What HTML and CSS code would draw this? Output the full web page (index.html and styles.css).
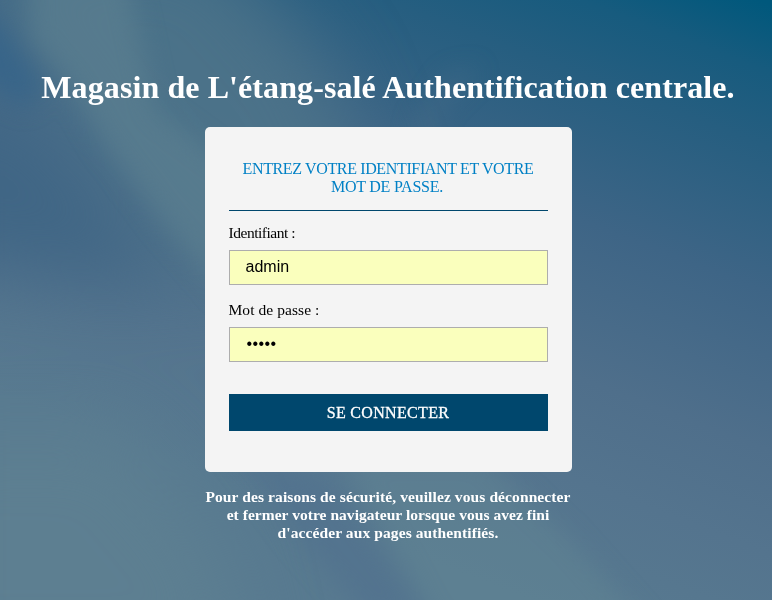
FILE: index.html
```html
<!DOCTYPE html>
<html lang="fr">
<head>
<meta charset="utf-8">
<title>Authentification centrale</title>
<link rel="stylesheet" href="styles.css">
</head>
<body>
<svg class="sky" viewBox="0 0 772 600" preserveAspectRatio="none" aria-hidden="true">
  <defs>
    <linearGradient id="base" gradientUnits="userSpaceOnUse" x1="760" y1="0" x2="530" y2="600">
      <stop offset="0" stop-color="#00587c"/>
      <stop offset=".1" stop-color="#175b7e"/>
      <stop offset=".21" stop-color="#265e80"/>
      <stop offset=".42" stop-color="#3e6586"/>
      <stop offset=".65" stop-color="#4f6f8b"/>
      <stop offset=".8" stop-color="#54748e"/>
      <stop offset="1" stop-color="#587a90"/>
    </linearGradient>
    <filter id="soft" x="-50%" y="-50%" width="200%" height="200%" color-interpolation-filters="sRGB"><feGaussianBlur stdDeviation="12"/></filter>
    <filter id="wide" x="-50%" y="-50%" width="200%" height="200%" color-interpolation-filters="sRGB"><feGaussianBlur stdDeviation="38"/></filter>
  </defs>
  <rect width="772" height="600" fill="url(#base)"/>
  <g filter="url(#wide)">
    <path d="M-60-60H210L320 60 380 200 210 290 50 80Z" fill="#4d748a" opacity=".85"/>
    <path d="M-80 40L60 130 180 290-80 260Z" fill="#406685"/>
    <path d="M-80 430L120 430 220 550 250 680H-80Z" fill="#5d7f91"/>
  </g>
  <g filter="url(#soft)">
    <path d="M28-30H125L155 110 230 165V300L165 225 105 145 70 85 30 38Z" fill="#5c8090" opacity=".65"/>
    <path d="M-30 5L5 30 42 85 26 108-30 70Z" fill="#31638a" opacity=".65"/>
    <path d="M340 455L480 455 570 540 650 630H440L390 540Z" fill="#618594" opacity=".5"/>
    <path d="M415 125L450 75 480 68 440 108 425 160Z" fill="#4b7089" opacity=".5"/>
    <path d="M225 440L330 480 430 620H370L300 540Z" fill="#50708e" opacity=".6"/>
  </g>
</svg>
<main class="page">
  <h1>Magasin de L'étang-salé Authentification centrale.</h1>
  <form class="card">
    <h2><span class="line-one">Entrez votre identifiant et votre</span><br><span class="line-two">mot de passe.</span></h2>
    <label class="user-label" for="user">Identifiant :</label>
    <input id="user" type="text" value="admin">
    <label class="pass-label" for="pass">Mot de passe :</label>
    <input id="pass" type="password" value="admin">
    <button type="button">SE CONNECTER</button>
  </form>
  <p class="notice"><span class="notice-one">Pour des raisons de sécurité, veuillez vous déconnecter</span><br><span class="notice-two">et fermer votre navigateur lorsque vous avez fini</span><br><span class="notice-three">d'accéder aux pages authentifiés.</span></p>
</main>
</body>
</html>
```
FILE: styles.css
```css
* { box-sizing: border-box; }
body {
  margin: 0;
  height: 600px;
  overflow: hidden;
  background: #426786;
  font-family: "Liberation Serif", serif;
}
.sky {
  position: absolute;
  inset: 0;
  width: 100%;
  height: 100%;
  z-index: -1;
}
.page {
  display: flex;
  flex-direction: column;
  align-items: center;
  padding: 69px 0 0 4px;
}
h1 {
  margin: 0 0 21px;
  color: #fff;
  font-size: 32px;
  line-height: 37px;
  letter-spacing: .09px;
  white-space: nowrap;
}
.card {
  display: flex;
  flex-direction: column;
  width: 367px;
  height: 345px;
  padding: 33px 24px 0;
  border-radius: 5px;
  background: #f4f4f4;
}
h2 {
  height: 51px;
  margin: 0 0 13px;
  border-bottom: 1px solid #00476d;
  color: #0080c5;
  font-size: 16px;
  font-weight: 400;
  line-height: 18px;
  text-align: center;
  text-transform: uppercase;
  white-space: nowrap;
}
.line-one { letter-spacing: -.36px; }
.line-two { letter-spacing: -.23px; padding-right: 2px; }
label {
  font-size: 16px;
  line-height: 18px;
  margin-bottom: 8px;
  color: #000;
}
.user-label { font-size: 15.5px; letter-spacing: -.47px; }
.pass-label { font-size: 15.5px; letter-spacing: .07px; }
input {
  width: 100%;
  height: 35px;
  margin: 0 0 16px;
  padding: 0 16px 2px;
  border: 1px solid #adadad;
  border-radius: 0;
  outline: 0;
  background: #faffbd;
  color: #000;
  font: 16px "Liberation Sans", sans-serif;
}
#pass {
  padding: 0 16px 1px 17px;
  letter-spacing: .4px;
}
button {
  height: 37px;
  margin-top: 16px;
  padding: 0;
  border: 0;
  background: #00476d;
  color: #fff;
  font: 16px "Liberation Serif", serif;
  letter-spacing: .33px;
  -webkit-text-stroke: .3px #fff;
}
.notice {
  width: 367px;
  margin: 16px 0 0;
  color: #fff;
  font-size: 15.5px;
  font-weight: 700;
  line-height: 18px;
  text-align: center;
  white-space: nowrap;
}
.notice-one { letter-spacing: .1px; }
.notice-two { letter-spacing: .04px; }
.notice-three { letter-spacing: .1px; }
```
